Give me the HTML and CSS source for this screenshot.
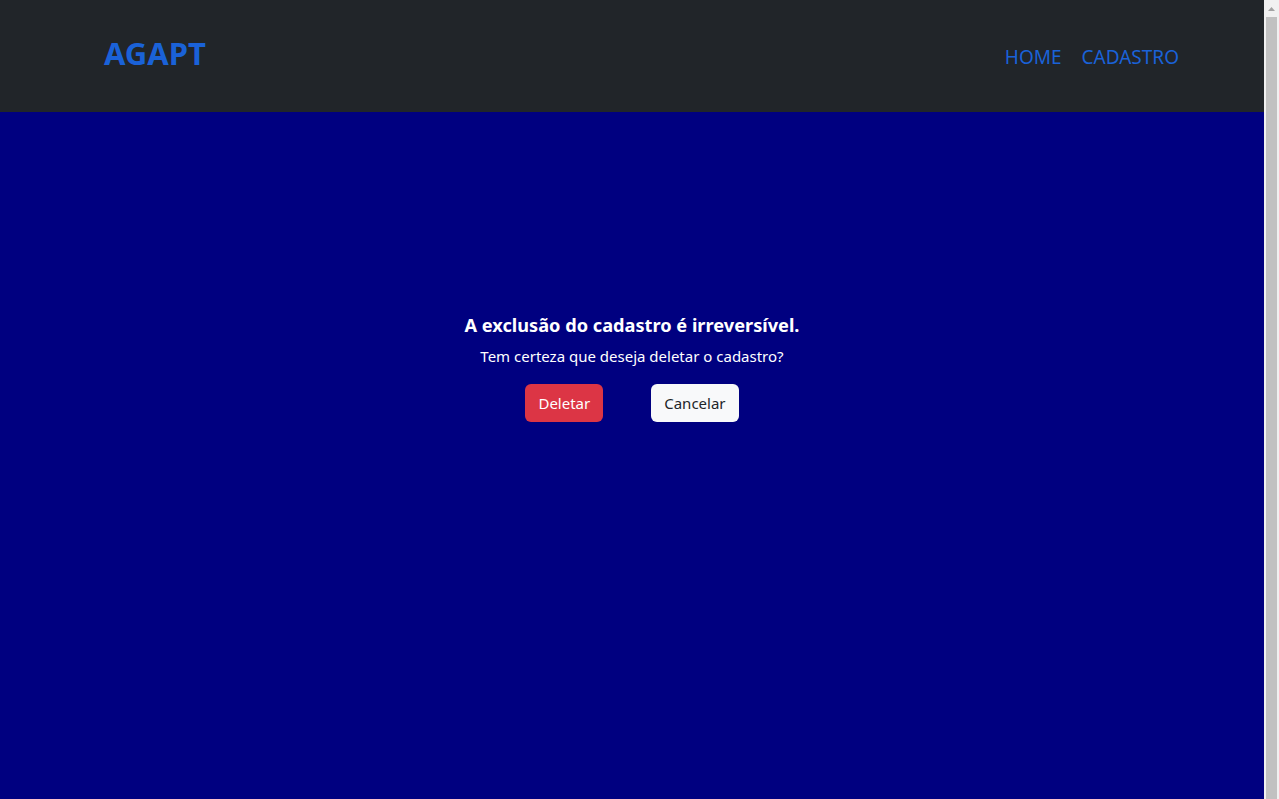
FILE: index.html
```html
<!DOCTYPE html>
<html lang="pt-BR">
<head>
<meta charset="utf-8">
<title>AGAPT</title>
<link rel="stylesheet" href="styles.css">
</head>
<body>
<div class="page">
  <header class="navbar">
    <a class="brand" href="#">AGAPT</a>
    <nav class="nav">
      <a class="nav-link" href="#">HOME</a>
      <a class="nav-link" href="#">CADASTRO</a>
    </nav>
  </header>
  <main class="content">
    <section class="confirm">
      <h5 class="confirm-title">A exclusão do cadastro é irreversível.</h5>
      <p class="confirm-text">Tem certeza que deseja deletar o cadastro?</p>
      <div class="actions">
        <button class="btn btn-danger" type="button">Deletar</button>
        <button class="btn btn-light" type="button">Cancelar</button>
      </div>
    </section>
  </main>
</div>
<div class="scrollbar" aria-hidden="true">
  <svg class="scroll-arrow" width="15" height="17" viewBox="0 0 15 17"><path d="M4 11 L7.5 7 L11 11 Z" fill="#a3a3a3"/></svg>
  <div class="scroll-thumb"></div>
</div>
</body>
</html>
```
FILE: styles.css
```css
* { box-sizing: border-box; }
html, body { margin: 0; padding: 0; }
body {
  font-family: "Noto Sans", "Open Sans", sans-serif;
  background: #000080;
  color: #fff;
  height: 799px;
  overflow: hidden;
  display: grid;
  grid-template-columns: 1fr 15px;
}
.page {
  display: flex;
  flex-direction: column;
  min-width: 0;
}
.navbar {
  height: 112px;
  flex: none;
  background: #212529;
  display: flex;
  align-items: flex-start;
  justify-content: space-between;
  padding: 0 85px 0 104px;
}
.brand {
  color: #1a62d8;
  text-decoration: none;
  font-weight: 700;
  font-size: 31px;
  line-height: 1;
  margin-top: 38px;
}
.nav {
  display: flex;
  gap: 20px;
  margin-top: 45px;
}
.nav-link {
  color: #1a62d8;
  text-decoration: none;
  font-size: 19px;
  line-height: 24px;
}
.content {
  display: flex;
  justify-content: center;
  padding-top: 200px;
}
.confirm {
  display: flex;
  flex-direction: column;
  align-items: center;
}
.confirm-title {
  margin: 0;
  font-size: 18.2px;
  font-weight: 700;
  line-height: 26px;
}
.confirm-text {
  margin: 8px 0 0;
  font-size: 15px;
  line-height: 20px;
}
.actions {
  display: flex;
  gap: 48px;
  margin-top: 18px;
}
.btn {
  font-family: inherit;
  font-size: 15px;
  height: 38px;
  padding: 0 12px;
  border: 1px solid transparent;
  border-radius: 6px;
  cursor: pointer;
}
.btn-danger { background: #dc3545; color: #fff; }
.btn-light { background: #f8f9fa; color: #212529; }
.scrollbar {
  background: #f1f1f1;
  display: flex;
  flex-direction: column;
  align-items: center;
}
.scroll-arrow { display: block; flex: none; }
.scroll-thumb {
  flex: 1;
  width: 11px;
  background: #c1c1c1;
}
```
